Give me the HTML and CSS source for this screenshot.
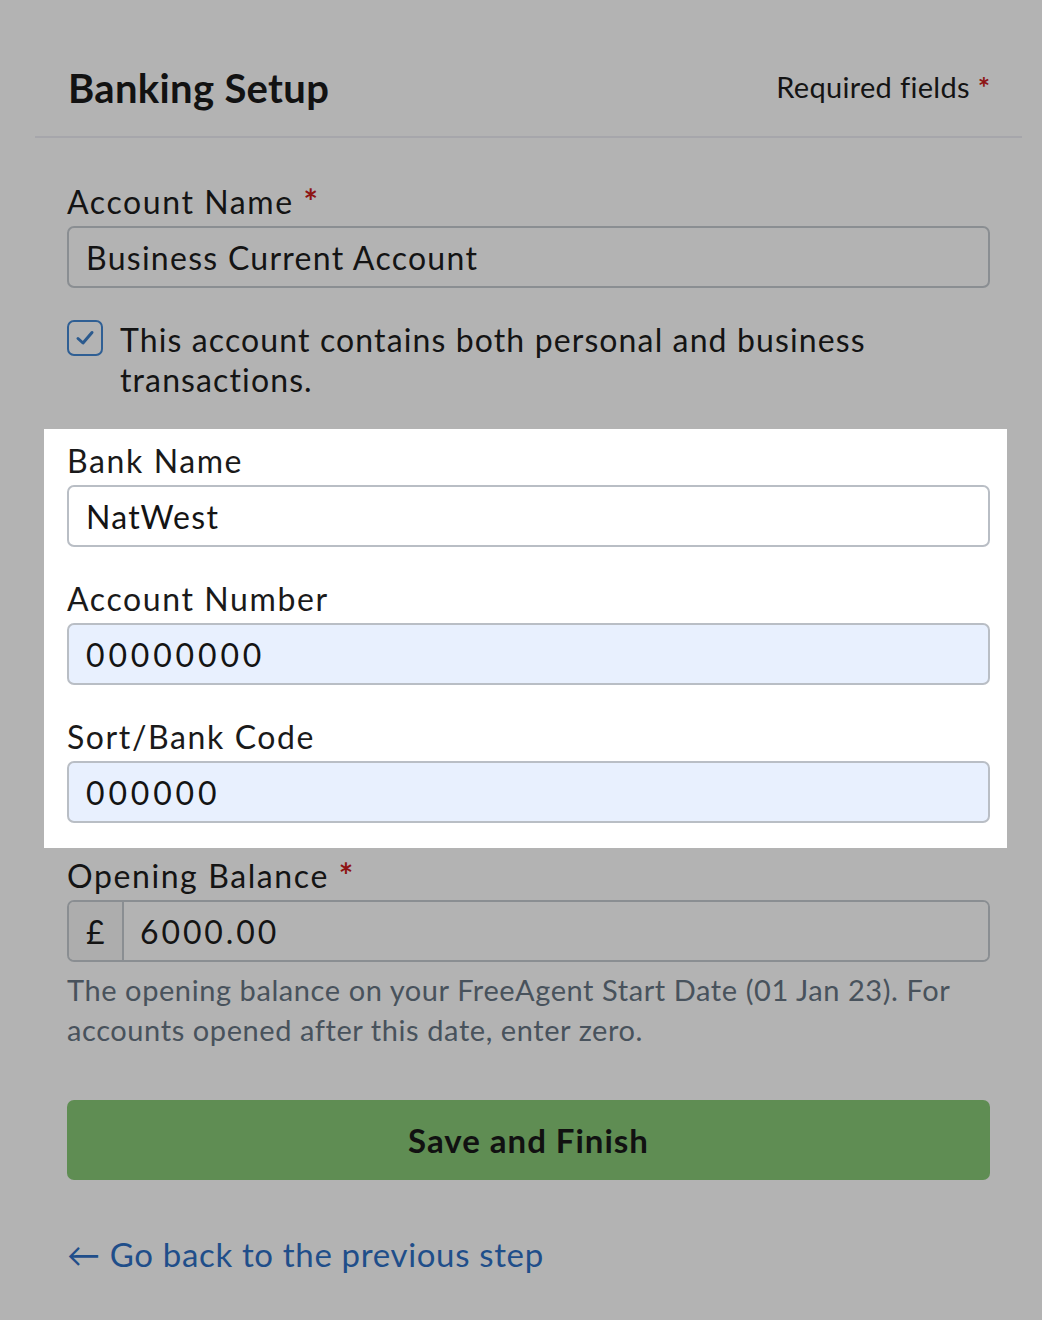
FILE: index.html
```html
<!DOCTYPE html>
<html lang="en">
<head>
    <meta charset="UTF-8">
    <meta name="viewport" content="width=device-width, initial-scale=1.0">
    <title>Banking Setup</title>
    <link rel="stylesheet" href="styles.css">
</head>
<body>
    <div class="page">
        <div class="header">
            <h2>Banking Setup</h2>
            <span class="required-note">Required fields <span class="req">*</span></span>
        </div>

        <form class="setup-form">
            <div class="field">
                <label for="account-name">Account Name <span class="req">*</span></label>
                <input type="text" id="account-name" value="Business Current Account">
            </div>

            <div class="check-row">
                <span class="checkbox">
                    <svg width="22" height="22" viewBox="0 0 22 22"><path d="M4 11.5 L9 16 L18 5.5" fill="none" stroke="#2b5a8e" stroke-width="3" stroke-linecap="round" stroke-linejoin="round"/></svg>
                </span>
                <span class="check-text">This account contains both personal and business transactions.</span>
            </div>

            <!-- bloco em destaque -->
            <div class="spotlight">
                <div class="field">
                    <label for="bank-name">Bank Name</label>
                    <input type="text" id="bank-name" value="NatWest">
                </div>
                <div class="field">
                    <label for="account-number">Account Number</label>
                    <input type="text" id="account-number" class="autofill" value="00000000">
                </div>
                <div class="field last">
                    <label for="sort-code">Sort/Bank Code</label>
                    <input type="text" id="sort-code" class="autofill" value="000000">
                </div>
            </div>

            <div class="field balance">
                <label for="opening-balance">Opening Balance <span class="req">*</span></label>
                <div class="money-group">
                    <span class="currency">£</span>
                    <input type="text" id="opening-balance" value="6000.00">
                </div>
                <p class="hint">The opening balance on your FreeAgent Start Date (01 Jan 23). For accounts opened after this date, enter zero.</p>
            </div>

            <button type="button" class="btn">Save and Finish</button>
            <a href="#" class="back-link">&larr; Go back to the previous step</a>
        </form>
    </div>
</body>
</html>
```

FILE: styles.css
```css
body, html {
    margin: 0;
    height: 100%;
    background: #b3b3b3;
    font-family: Lato, "Open Sans", sans-serif;
    letter-spacing: 0.02em;
    color: #141414;
}

.page {
    padding: 0 20px 0 35px;
}

.header {
    display: flex;
    justify-content: space-between;
    align-items: center;
    padding: 64px 32px 24px 33px;
    border-bottom: 2px solid #a6a6ab;
}

.header h2 {
    margin: 0;
    font-size: 40px;
    font-weight: 700;
    color: #121212;
}

.required-note {
    font-size: 29px;
    margin-top: -4px;
}

.req {
    color: #8e1414;
    font-weight: 700;
    letter-spacing: 0;
}

.field label .req {
    font-size: 34px;
}

.setup-form {
    padding: 44px 32px 0 32px;
}

.field {
    margin-bottom: 33px;
}

.field label {
    display: block;
    margin-bottom: 5px;
    font-size: 32px;
    line-height: 38px;
    letter-spacing: 0.05em;
}

.field input {
    display: block;
    box-sizing: border-box;
    width: 100%;
    height: 62px;
    padding: 0 17px;
    font-family: inherit;
    font-size: 32px;
    letter-spacing: 0.04em;
    color: #141414;
    background: #b3b3b3;
    border: 2px solid #8a8e92;
    border-radius: 7px;
}

.check-row {
    display: flex;
    gap: 17px;
    margin-top: -1px;
    margin-bottom: 29px;
}

.checkbox {
    flex: none;
    width: 36px;
    height: 36px;
    box-sizing: border-box;
    border: 2px solid #2f5f94;
    border-radius: 7px;
    display: flex;
    align-items: center;
    justify-content: center;
}

.check-text {
    font-size: 32px;
    line-height: 40px;
    letter-spacing: 0.035em;
    padding-right: 100px;
}

.spotlight {
    background: #fff;
    margin: 0 -17px 0 -23px;
    padding: 13px 17px 25px 23px;
}

.spotlight .field input {
    background: #fff;
    border-color: #b9bec5;
}

.spotlight .field input.autofill {
    background: #e8f0fe;
    letter-spacing: 0.12em;
}

.spotlight .field.last {
    margin-bottom: 0;
}

.spotlight label {
    color: #1a1a1a;
}

.balance {
    margin-top: 8px;
    margin-bottom: 50px;
}

.money-group {
    display: flex;
    border: 2px solid #8a8e92;
    border-radius: 7px;
    overflow: hidden;
}

.currency {
    width: 53px;
    flex: none;
    display: flex;
    align-items: center;
    justify-content: center;
    font-size: 32px;
    background: #adadad;
    border-right: 2px solid #8a8e92;
}

.money-group input {
    border: none;
    border-radius: 0;
    height: 58px;
    padding-left: 16px;
    letter-spacing: 0.09em;
}

.hint {
    margin: 8px 0 0;
    font-size: 29px;
    line-height: 40px;
    letter-spacing: 0.02em;
    color: #48525c;
}

.btn {
    display: block;
    width: 100%;
    height: 80px;
    font-family: inherit;
    font-size: 33px;
    font-weight: 700;
    letter-spacing: 0.03em;
    color: #111;
    background: #5f8d53;
    border: none;
    border-radius: 7px;
}

.back-link {
    display: inline-block;
    margin-top: 54px;
    font-size: 33px;
    letter-spacing: 0.02em;
    color: #1f4e8a;
    text-decoration: none;
}
```
